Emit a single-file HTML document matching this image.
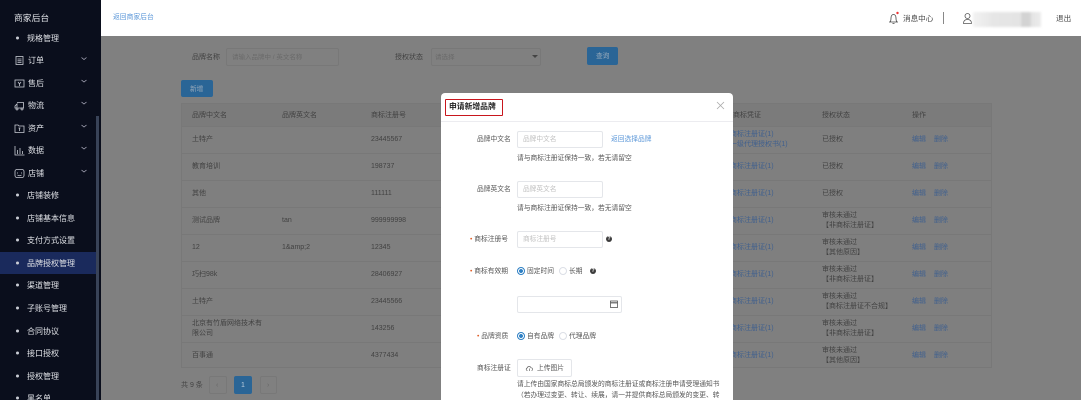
<!DOCTYPE html>
<html lang="zh"><head><meta charset="utf-8"><title>商家后台</title>
<style>
html,body{margin:0;padding:0;width:1081px;height:400px;overflow:hidden;background:#808080}
body{position:relative;font-family:"Liberation Sans","Noto Sans CJK SC",sans-serif;font-size:7px;color:#424242}
#r{position:absolute;inset:0;filter:blur(.35px);overflow:hidden}
.t{position:absolute;white-space:nowrap;line-height:10px;height:10px;transform:translateY(-3px)}
.b{position:absolute;box-sizing:border-box}
#side{position:absolute;left:0;top:0;width:101px;height:400px;background:#0a0e1c;color:#dfe1e6;overflow:hidden}
#side .t{font-size:8px}
#side .dot{position:absolute;left:16px;width:3px;height:3px;border-radius:50%;background:#c9ccd4;transform:translateY(-.5px)}
#side svg{position:absolute}
#top{position:absolute;left:101px;top:0;width:980px;height:36px;background:#fff}
.line{position:absolute;left:181px;width:811px;height:1px;background:#787878}
.l{color:#40608e}
.inp{background:#808080;border:1px solid #787878;border-radius:2px}
#modal{position:absolute;left:441px;top:93px;width:292px;height:307px;overflow:hidden;background:#fff;border-radius:4px 4px 0 0;color:#555}
#modal .t{font-size:6.750px}
.mi{position:absolute;box-sizing:border-box;background:#fff;border:1px solid #e4e6ea;border-radius:2px;left:76px;height:17px;width:86px;color:#c0c0c0;font-size:6.700px;line-height:15px;padding-left:5px}
.rd{position:absolute;width:8px;height:8px;box-sizing:border-box;border-radius:50%;border:1px solid #dcdfe6;background:#fff;transform:translateY(-3px)}
.rd.on{border-color:#2d7fc4;background:radial-gradient(circle,#2d7fc4 0 1.800px,#fff 2.100px)}
.q{position:absolute;width:6px;height:6px;border-radius:50%;background:#3c3c3c;color:#fff;font-size:5px;line-height:6px;text-align:center;font-weight:bold;transform:translateY(-2px)}
.rq{color:#e0602a}
</style></head><body><div id="r">

<div class="t" style="left:192px;top:56px">品牌名称</div>
<div class="b inp" style="left:226px;top:48px;width:113px;height:18px"></div>
<div class="t" style="left:232px;top:56px;color:#6a6a6a;font-size:6.500px">请输入品牌中 / 英文名称</div>
<div class="t" style="left:395px;top:56px">授权状态</div>
<div class="b inp" style="left:431px;top:48px;width:110px;height:18px"></div>
<div class="t" style="left:435px;top:56px;color:#6a6a6a;font-size:6.500px">请选择</div>
<div class="b" style="left:532px;top:55px;border:3px solid transparent;border-top:3.500px solid #444"></div>
<div class="b" style="left:587px;top:47px;width:31px;height:18px;background:#2a6596;border-radius:2px"></div>
<div class="t" style="left:596px;top:55px;color:#9ab;font-size:6.700px">查询</div>
<div class="b" style="left:181px;top:80px;width:32px;height:17px;background:#2a6596;border-radius:2px"></div>
<div class="t" style="left:190px;top:88px;color:#9ab;font-size:6.700px">新增</div>

<div class="b" style="left:181px;top:103px;width:811px;height:265px;border:1px solid #787878;background:#7f7f7f"></div>
<div class="b" style="left:182px;top:104px;width:809px;height:22px;background:#7b7b7b"></div>
<div class="line" style="top:126px"></div><div class="line" style="top:153px"></div><div class="line" style="top:180px"></div><div class="line" style="top:207px"></div><div class="line" style="top:234px"></div><div class="line" style="top:261px"></div><div class="line" style="top:288px"></div><div class="line" style="top:315px"></div><div class="line" style="top:342px"></div>

<div class="t" style="left:192px;top:114px">品牌中文名</div><div class="t" style="left:282px;top:114px">品牌英文名</div><div class="t" style="left:371px;top:114px">商标注册号</div>
<div class="t" style="left:192px;top:138px">土特产</div><div class="t" style="left:371px;top:138px">23445567</div>
<div class="t" style="left:192px;top:165px">教育培训</div><div class="t" style="left:371px;top:165px">198737</div>
<div class="t" style="left:192px;top:192px">其他</div><div class="t" style="left:371px;top:192px">111111</div>
<div class="t" style="left:192px;top:219px">测试品牌</div><div class="t" style="left:282px;top:219px">tan</div><div class="t" style="left:371px;top:219px">999999998</div>
<div class="t" style="left:192px;top:246px">12</div><div class="t" style="left:282px;top:246px">1&amp;amp;2</div><div class="t" style="left:371px;top:246px">12345</div>
<div class="t" style="left:192px;top:273px">巧扫98k</div><div class="t" style="left:371px;top:273px">28406927</div>
<div class="t" style="left:192px;top:300px">土特产</div><div class="t" style="left:371px;top:300px">23445566</div>
<div class="t" style="left:192px;top:322px">北京有竹盾网络技术有</div><div class="t" style="left:192px;top:332px">限公司</div><div class="t" style="left:371px;top:327px">143256</div>
<div class="t" style="left:192px;top:354px">百事通</div><div class="t" style="left:371px;top:354px">4377434</div>

<div class="t" style="left:733px;top:114px">商标凭证</div><div class="t" style="left:822px;top:114px">授权状态</div><div class="t" style="left:912px;top:114px">操作</div>
<div class="t l" style="left:730px;top:133px">商标注册证(1)</div><div class="t l" style="left:730px;top:143px">一级代理授权书(1)</div>
<div class="t l" style="left:730px;top:165px">商标注册证(1)</div>
<div class="t l" style="left:730px;top:192px">商标注册证(1)</div>
<div class="t l" style="left:730px;top:219px">商标注册证(1)</div>
<div class="t l" style="left:730px;top:246px">商标注册证(1)</div>
<div class="t l" style="left:730px;top:273px">商标注册证(1)</div>
<div class="t l" style="left:730px;top:300px">商标注册证(1)</div>
<div class="t l" style="left:730px;top:327px">商标注册证(1)</div>
<div class="t l" style="left:730px;top:354px">商标注册证(1)</div>

<div class="t" style="left:822px;top:138px">已授权</div>
<div class="t" style="left:822px;top:165px">已授权</div>
<div class="t" style="left:822px;top:192px">已授权</div>
<div class="t" style="left:822px;top:214px">审核未通过</div><div class="t" style="left:822px;top:224px">【非商标注册证】</div>
<div class="t" style="left:822px;top:241px">审核未通过</div><div class="t" style="left:822px;top:251px">【其他原因】</div>
<div class="t" style="left:822px;top:268px">审核未通过</div><div class="t" style="left:822px;top:278px">【非商标注册证】</div>
<div class="t" style="left:822px;top:295px">审核未通过</div><div class="t" style="left:822px;top:305px">【商标注册证不合规】</div>
<div class="t" style="left:822px;top:322px">审核未通过</div><div class="t" style="left:822px;top:332px">【非商标注册证】</div>
<div class="t" style="left:822px;top:349px">审核未通过</div><div class="t" style="left:822px;top:359px">【其他原因】</div>

<div class="t l" style="left:912px;top:138px">编辑</div><div class="t l" style="left:934px;top:138px">删除</div>
<div class="t l" style="left:912px;top:165px">编辑</div><div class="t l" style="left:934px;top:165px">删除</div>
<div class="t l" style="left:912px;top:192px">编辑</div><div class="t l" style="left:934px;top:192px">删除</div>
<div class="t l" style="left:912px;top:219px">编辑</div><div class="t l" style="left:934px;top:219px">删除</div>
<div class="t l" style="left:912px;top:246px">编辑</div><div class="t l" style="left:934px;top:246px">删除</div>
<div class="t l" style="left:912px;top:273px">编辑</div><div class="t l" style="left:934px;top:273px">删除</div>
<div class="t l" style="left:912px;top:300px">编辑</div><div class="t l" style="left:934px;top:300px">删除</div>
<div class="t l" style="left:912px;top:327px">编辑</div><div class="t l" style="left:934px;top:327px">删除</div>
<div class="t l" style="left:912px;top:354px">编辑</div><div class="t l" style="left:934px;top:354px">删除</div>

<div class="t" style="left:181px;top:384px">共 9 条</div>
<div class="b inp" style="left:209px;top:376px;width:18px;height:18px"></div><div class="t" style="left:216px;top:384px;color:#666">‹</div>
<div class="b" style="left:234px;top:376px;width:18px;height:18px;background:#2a6596;border-radius:2px"></div><div class="t" style="left:241px;top:384px;color:#bcd">1</div>
<div class="b inp" style="left:260px;top:376px;width:17px;height:18px"></div><div class="t" style="left:267px;top:384px;color:#666">›</div>

<div id="top"></div>
<div class="t" style="left:113px;top:16px;color:#5b97d8;font-size:6.800px">返回商家后台</div>
<svg style="position:absolute;left:887px;top:11px" width="14" height="14" viewBox="0 0 14 14" fill="none" stroke="#444" stroke-width=".8"><path d="M2 11h9M3 11c1-1 1-2 1-4s1-3.500 2.500-3.500S9 5 9 7s0 3 1 4M5.500 12.500h2"/><circle cx="10.500" cy="2" r="1.200" fill="#e33" stroke="none"/></svg>
<div class="t" style="left:903px;top:17px;font-size:7.600px;color:#444">消息中心</div>
<div class="b" style="left:943px;top:12px;width:1px;height:12px;background:#888"></div>
<svg style="position:absolute;left:962px;top:12px" width="11" height="13" viewBox="0 0 11 13" fill="none" stroke="#555" stroke-width=".8"><circle cx="5.500" cy="4" r="2.500"/><path d="M1.500 11.500c0-3 1.500-4 4-4s4 1 4 4z"/></svg>
<div class="b" style="left:973px;top:12px;width:68px;height:15px;background:linear-gradient(90deg,#f2f2f2,#e6e6e6 30%,#e4e4e4 70%,#d2d2d2 72%,#d4d4d4 84%,#e4e4e4 86%,#ececec);filter:blur(1px)"></div>
<div class="t" style="left:1056px;top:17px;font-size:7.600px;color:#444">退出</div>

<div id="side">
<div class="t" style="left:14px;top:16px;font-size:8.800px">商家后台</div>
<div class="dot" style="top:37px"></div><div class="t" style="left:27px;top:37px">规格管理</div>
<svg style="left:14px;top:55px" width="11" height="11" viewBox="0 0 11 11" fill="none" stroke="#c9ccd4" stroke-width=".8"><rect x="2" y="1.500" width="7" height="8"/><path d="M3.500 4h4M3.500 5.800h4M3.500 7.500h4"/></svg><div class="t" style="left:28px;top:59px">订单</div>
<svg style="left:14px;top:78px" width="11" height="11" viewBox="0 0 11 11" fill="none" stroke="#c9ccd4" stroke-width=".8"><rect x="1" y="2" width="9" height="7"/><path d="M4 4l1.500 2L7 4M5.500 6v2"/></svg><div class="t" style="left:28px;top:82px">售后</div>
<svg style="left:14px;top:100px" width="11" height="11" viewBox="0 0 11 11" fill="none" stroke="#c9ccd4" stroke-width=".8"><path d="M3 2.500h6.500v5.500H4M1 6l2-2v4H1z"/><circle cx="3" cy="9" r="1"/><circle cx="8" cy="9" r="1"/></svg><div class="t" style="left:28px;top:104px">物流</div>
<svg style="left:14px;top:123px" width="11" height="11" viewBox="0 0 11 11" fill="none" stroke="#c9ccd4" stroke-width=".8"><path d="M1 2h3l1 1h5v6.500H1z"/><path d="M4.500 5h2M5.500 5v3"/></svg><div class="t" style="left:28px;top:127px">资产</div>
<svg style="left:14px;top:145px" width="11" height="11" viewBox="0 0 11 11" fill="none" stroke="#c9ccd4" stroke-width=".8"><path d="M1 1v9h9.500M3.500 5v4M6 3v6M8.500 6v3"/></svg><div class="t" style="left:28px;top:149px">数据</div>
<svg style="left:14px;top:168px" width="11" height="11" viewBox="0 0 11 11" fill="none" stroke="#c9ccd4" stroke-width=".8"><rect x="1" y="1.500" width="9" height="8" rx="2"/><path d="M3.500 4.500v1M7.500 4.500v1M3.500 7c1 1 3 1 4 0"/></svg><div class="t" style="left:28px;top:172px">店铺</div>
<svg style="left:81px;top:56px" width="6" height="125" viewBox="0 0 6 125" fill="none" stroke="#aab" stroke-width=".8"><path d="M.5 1.500L3 3.500 5.500 1.500M.5 24L3 26 5.500 24M.5 46L3 48 5.500 46M.5 69L3 71 5.500 69M.5 91L3 93 5.500 91M.5 114L3 116 5.500 114"/></svg>
<div class="b" style="left:0;top:252px;width:96px;height:22px;background:#1a2a5c"></div>
<div class="dot" style="top:194px"></div><div class="t" style="left:27px;top:194px">店铺装修</div>
<div class="dot" style="top:217px"></div><div class="t" style="left:27px;top:217px">店铺基本信息</div>
<div class="dot" style="top:239px"></div><div class="t" style="left:27px;top:239px">支付方式设置</div>
<div class="dot" style="top:262px"></div><div class="t" style="left:27px;top:262px">品牌授权管理</div>
<div class="dot" style="top:284px"></div><div class="t" style="left:27px;top:284px">渠道管理</div>
<div class="dot" style="top:307px"></div><div class="t" style="left:27px;top:307px">子账号管理</div>
<div class="dot" style="top:330px"></div><div class="t" style="left:27px;top:330px">合同协议</div>
<div class="dot" style="top:352px"></div><div class="t" style="left:27px;top:352px">接口授权</div>
<div class="dot" style="top:375px"></div><div class="t" style="left:27px;top:375px">授权管理</div>
<div class="dot" style="top:397px"></div><div class="t" style="left:27px;top:397px">黑名单</div>
<div class="b" style="left:96px;top:116px;width:3px;height:284px;background:#394358"></div>
</div>

<div id="modal">
<div class="b" style="left:4px;top:6px;width:58px;height:17px;border:1.500px solid #c8161d;border-radius:1px"></div>
<div class="t" style="left:8px;top:12px;font-size:7.800px;font-weight:bold;color:#222">申请新增品牌</div>
<div class="b" style="left:0;top:28px;width:292px;height:1px;background:#ececf0"></div>
<svg style="position:absolute;left:275px;top:8px" width="9" height="9" viewBox="0 0 9 9" stroke="#aaa" stroke-width=".8"><path d="M1 1l7 7M8 1l-7 7"/></svg>

<div class="t" style="left:36px;top:45px">品牌中文名</div>
<div class="mi" style="top:38px">品牌中文名</div>
<div class="t" style="left:170px;top:45px;color:#5b97d8">返回选择品牌</div>
<div class="t" style="left:76px;top:64px">请与商标注册证保持一致，若无请留空</div>

<div class="t" style="left:36px;top:95px">品牌英文名</div>
<div class="mi" style="top:88px">品牌英文名</div>
<div class="t" style="left:76px;top:114px">请与商标注册证保持一致，若无请留空</div>

<div class="t" style="left:29px;top:145px"><span class="rq">• </span>商标注册号</div>
<div class="mi" style="top:138px">商标注册号</div>
<div class="q" style="left:165px;top:145px">?</div>

<div class="t" style="left:29px;top:177px"><span class="rq">• </span>商标有效期</div>
<div class="rd on" style="left:76px;top:177px"></div><div class="t" style="left:86px;top:177px">固定时间</div>
<div class="rd" style="left:118px;top:177px"></div><div class="t" style="left:128px;top:177px">长期</div>
<div class="q" style="left:149px;top:177px">?</div>

<div class="mi" style="top:203px;width:105px"></div>
<svg style="position:absolute;left:168px;top:206px" width="10" height="10" viewBox="0 0 10 10" fill="none" stroke="#555" stroke-width=".8"><rect x="1.500" y="2" width="7" height="6.500"/><path d="M1.500 3.800h7" stroke-width="1.200"/></svg>

<div class="t" style="left:36px;top:242px"><span class="rq">• </span>品牌资质</div>
<div class="rd on" style="left:76px;top:242px"></div><div class="t" style="left:86px;top:242px">自有品牌</div>
<div class="rd" style="left:118px;top:242px"></div><div class="t" style="left:128px;top:242px">代理品牌</div>

<div class="t" style="left:36px;top:274px">商标注册证</div>
<div class="mi" style="top:266px;width:55px;height:18px"></div>
<svg style="position:absolute;left:84px;top:271px" width="9" height="8" viewBox="0 0 9 8" fill="none" stroke="#666" stroke-width=".7"><path d="M2.500 6.500C1 6.500.7 4.500 2.200 4 2.500 2 5.500 2 6 3.800c2-.2 2 2.700.5 2.700M4.500 7V4.500"/></svg>
<div class="t" style="left:96px;top:274px">上传图片</div>
<div class="t" style="left:76px;top:290px">请上传由国家商标总局颁发的商标注册证或商标注册申请受理通知书</div>
<div class="t" style="left:76px;top:301px">（若办理过变更、转让、续展，请一并提供商标总局颁发的变更、转</div>
</div>

</div></body></html>
